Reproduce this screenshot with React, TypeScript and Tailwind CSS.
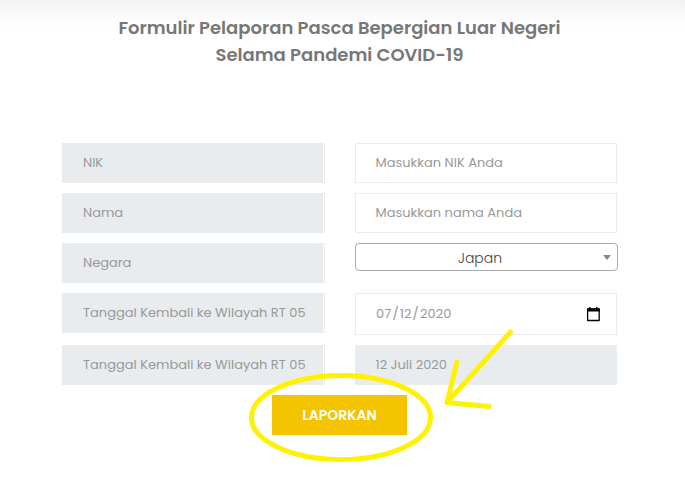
import type { ReactNode } from "react";

function Locked({ children, className = "" }: { children: ReactNode; className?: string }) {
  return (
    <div className={`flex h-10 items-center border border-[#ebedee] bg-[#e8ecef] pl-[19.5px] whitespace-nowrap text-[#999] ${className}`}>
      {children}
    </div>
  );
}

function Label({ children }: { children: string }) {
  return (
    <div className="flex h-10 w-[263px] border border-[#ebebeb] border-l-[#e8ecef] bg-white pr-px">
      <div className="flex grow items-center bg-[#e8ecef] pl-5 whitespace-nowrap text-[#999]">{children}</div>
    </div>
  );
}

function Field({ placeholder }: { placeholder: string }) {
  return (
    <input
      placeholder={placeholder}
      className="h-10 w-[262px] border border-[#ebebeb] bg-white pl-[19.5px] text-[#999] placeholder:text-[#999]"
    />
  );
}

export default function App() {
  return (
    <main className="relative h-[477px] w-[685px] overflow-hidden bg-white font-['Poppins','Inter',sans-serif] text-[13px]">
      <div className="h-[477px] bg-[linear-gradient(#f2f2f2_0px,#f9f9f9_12px,#fdfdfd_22px,#ffffff_32px)] pt-[14px]">
        <h1 className="flex h-[54px] w-[679px] flex-col items-center text-[18px] leading-[27px] font-semibold whitespace-nowrap text-[#777]">
          <span>Formulir Pelaporan Pasca Bepergian Luar Negeri</span>
          <span>Selama Pandemi COVID-19</span>
        </h1>
        <form className="mt-[75px] ml-[62px] flex w-[556px] flex-col gap-2.5">
          <div className="flex gap-[30px]">
            <Label>NIK</Label>
            <Field placeholder="Masukkan NIK Anda" />
          </div>
          <div className="flex gap-[30px]">
            <Label>Nama</Label>
            <Field placeholder="Masukkan nama Anda" />
          </div>
          <div className="flex gap-[30px]">
            <Label>Negara</Label>
            <div className="flex h-7 w-[263px] items-center rounded-[4px] border border-[#aaa] bg-white pr-1.5 text-[14px] text-[#444]">
              <span className="grow pt-0.5 pl-px text-center font-light">Japan</span>
              <svg width="8" height="5" viewBox="0 0 8 5"><path d="M0 0H8L4 5Z" fill="#888" /></svg>
            </div>
          </div>
          <div className="flex gap-[30px]">
            <Label>Tanggal Kembali ke Wilayah RT 05</Label>
            <div className="flex h-[42px] w-[262px] items-center justify-between border border-[#ebebeb] bg-white pr-4 pl-5 text-[#999]">
              <span className="flex gap-px tracking-[0.1px]"><span>07</span><span>/</span><span>12</span><span>/</span><span>2020</span></span>
              <svg width="14" height="15" viewBox="0 0 14 15" fill="none">
                <path d="M3.8 0V2M10.8 0V2" stroke="#000" strokeWidth="1.4" />
                <path d="M1.6 2H13.2V13.5H1.6Z" stroke="#000" strokeWidth="1.3" strokeLinejoin="round" />
                <path d="M1 1.5H13.8V4.5H1Z" fill="#000" />
              </svg>
            </div>
          </div>
          <div className="flex gap-[30px]">
            <Label>Tanggal Kembali ke Wilayah RT 05</Label>
            <Locked className="w-[262px]">12 Juli 2020</Locked>
          </div>
          <button type="button" className="ml-[210px] h-10 w-[135px] bg-[#f5c400] text-[14px] font-semibold text-white">LAPORKAN</button>
        </form>
      </div>
      <svg className="pointer-events-none absolute inset-0" width="685" height="477" viewBox="0 0 685 477" fill="none" stroke="#fff200" strokeWidth="5" strokeLinecap="round" strokeLinejoin="round">
        <ellipse cx="341" cy="417.5" rx="89.5" ry="42" />
        <path d="M510.5 332L447 402.5M457 362L447 402.5L489 406.5" />
      </svg>
    </main>
  );
}
